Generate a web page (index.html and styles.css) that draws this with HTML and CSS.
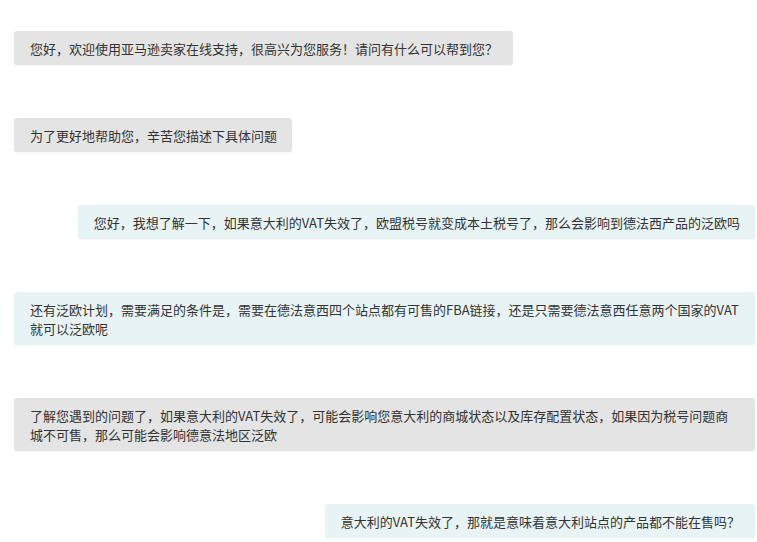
FILE: index.html
```html
<!DOCTYPE html>
<html lang="zh-CN">
<head>
    <meta charset="UTF-8">
    <meta name="viewport" content="width=device-width, initial-scale=1.0">
    <title>亚马逊卖家在线支持</title>
    <link rel="stylesheet" href="styles.css">
</head>
<body>
    <div class="chat">
        <!-- agent -->
        <div class="msg msg-agent">您好，欢迎使用亚马逊卖家在线支持，很高兴为您服务！请问有什么可以帮到您？</div>
        <div class="msg msg-agent">为了更好地帮助您，辛苦您描述下具体问题</div>

        <!-- seller -->
        <div class="msg msg-me">您好，我想了解一下，如果意大利的VAT失效了，欧盟税号就变成本土税号了，那么会影响到德法西产品的泛欧吗</div>
        <div class="msg msg-me">还有泛欧计划，需要满足的条件是，需要在德法意西四个站点都有可售的FBA链接，还是只需要德法意西任意两个国家的VAT就可以泛欧呢</div>

        <div class="msg msg-agent">了解您遇到的问题了，如果意大利的VAT失效了，可能会影响您意大利的商城状态以及库存配置状态，如果因为税号问题商城不可售，那么可能会影响德意法地区泛欧</div>

        <div class="msg msg-me">意大利的VAT失效了，那就是意味着意大利站点的产品都不能在售吗？</div>
    </div>
</body>
</html>
```

FILE: styles.css
```css
body {
    margin: 0;
    background-color: #ffffff;
    font-family: "Noto Sans CJK SC", "Microsoft YaHei", sans-serif;
    color: #333333;
}
.chat {
    display: flex;
    flex-direction: column;
    gap: 53px;
    padding: 31px 2px 0 14px;
}
.msg {
    max-width: 100%;
    box-sizing: border-box;
    padding: 8px 15px 7px 16px;
    font-size: 13px;
    line-height: 19px;
    border-radius: 3px;
    box-shadow: 0 1px 2px rgba(0, 0, 0, 0.04);
}
.msg-agent {
    align-self: flex-start;
    background-color: #e4e4e4;
}
.msg-me {
    align-self: flex-end;
    background-color: #e8f3f5;
}
```
